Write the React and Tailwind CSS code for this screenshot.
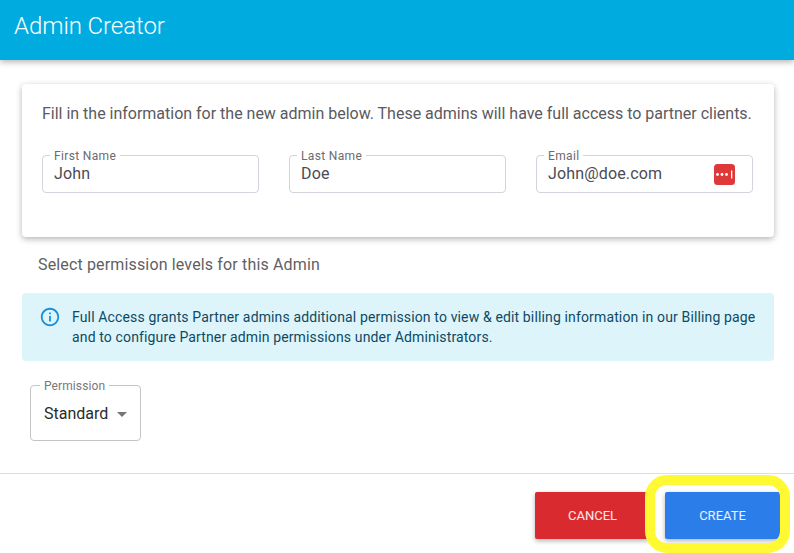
import React from 'react';

const Field = ({ label, value, width, children }) => (
    <div className={`relative h-[38px] rounded-[4px] border border-[#d3d4dc] flex items-center justify-between pl-[11px] pr-[17px] ${width}`}>
        <span className="absolute left-[7px] top-[-7px] bg-white px-[4px] text-[12px] leading-[14px] tracking-[0.35px] text-[#6b6b70]">{label}</span>
        <span className="text-[16px] leading-[20px] tracking-[0.15px] text-[#4a4c55] mt-[-1px]">{value}</span>
        {children}
    </div>
);

const PasswordIcon = () => (
    <svg width="21" height="21" viewBox="0 0 21 21">
        <rect width="21" height="21" rx="3.5" fill="#de3838" />
        <circle cx="3.5" cy="10.5" r="1.4" fill="#fff" />
        <circle cx="8" cy="10.5" r="1.4" fill="#fff" />
        <circle cx="12.5" cy="10.5" r="1.4" fill="#fff" />
        <rect x="17" y="6.5" width="1.3" height="8" fill="#fff" />
    </svg>
);

const InfoIcon = () => (
    <svg width="22" height="22" viewBox="0 0 24 24" fill="#1a8fdc">
        <path d="M11 7h2v2h-2zm0 4h2v6h-2zm1-9C6.48 2 2 6.48 2 12s4.48 10 10 10 10-4.48 10-10S17.52 2 12 2zm0 18c-4.41 0-8-3.59-8-8s3.59-8 8-8 8 3.59 8 8-3.59 8-8 8z" />
    </svg>
);

const App = () => {
    return (
        <div className="relative w-[794px] h-[553px] overflow-hidden bg-white font-['Roboto',sans-serif]">
            <header className="h-[60px] bg-[#00acdf] flex items-center pl-[14px] shadow-[0_2px_6px_rgba(0,0,0,0.3)]">
                <h1 className="text-[24px] leading-[28px] font-light tracking-[-0.08px] text-white mt-[-8px]">Admin Creator</h1>
            </header>

            <main className="pl-[22px] pr-[20px] pt-[24px]">
                <section className="h-[153px] rounded-[4px] bg-white pt-[20px] px-[20px] shadow-[0_2px_6px_rgba(0,0,0,0.3)]">
                    <p className="text-[16px] leading-[20px] tracking-[-0.01px] text-[#5a5a5f] whitespace-nowrap">
                        Fill in the information for the new admin below. These admins will have full access to partner clients.
                    </p>
                    <div className="flex mt-[31px] gap-[30px]">
                        <Field label="First Name" value="John" width="w-[217px]" />
                        <Field label="Last Name" value="Doe" width="w-[217px]" />
                        <Field label="Email" value="John@doe.com" width="w-[217px]">
                            <PasswordIcon />
                        </Field>
                    </div>
                </section>

                <p className="mt-[18px] ml-[16px] text-[16px] leading-[20px] text-[#5f5f64] tracking-[0.15px]">Select permission levels for this Admin</p>

                <div className="mt-[18px] h-[68px] rounded-[4px] bg-[#def4fb] flex pl-[17px] pt-[13px]">
                    <InfoIcon />
                    <p className="ml-[11px] mt-[1px] text-[14px] leading-[20px] tracking-[0.14px] text-[#0c4a63]">
                        Full Access grants Partner admins additional permission to view &amp; edit billing information in our Billing page
                        <br />
                        and to configure Partner admin permissions under Administrators.
                    </p>
                </div>

                <div className="relative mt-[24px] ml-[8px] h-[56px] w-[111px] rounded-[4px] border border-[#c4c4c4] flex items-center pl-[13px] pt-[2px]">
                    <span className="absolute left-[9px] top-[-7px] bg-white px-[4px] text-[12px] leading-[14px] tracking-[0.1px] text-[#77777a]">Permission</span>
                    <span className="text-[16px] leading-[20px] text-[#2b2b2b]">Standard</span>
                    <svg className="ml-[9px]" width="10" height="5" viewBox="0 0 10 5">
                        <path d="M0 0h10L5 5z" fill="#757575" />
                    </svg>
                </div>
            </main>

            <footer className="mt-[32px] border-t border-[#dedede] flex justify-end gap-[15px] pt-[18px] pr-[14px]">
                <button className="w-[115px] h-[47px] rounded-[2px] bg-[#d92b2f] text-[13px] text-white/90 shadow-[0_2px_5px_rgba(0,0,0,0.3)]">CANCEL</button>
                <button className="w-[115px] h-[47px] rounded-[2px] bg-[#2b7de9] text-[13px] text-white/90 shadow-[0_2px_5px_rgba(0,0,0,0.3)]">CREATE</button>
            </footer>

            {/* highlight drawn over the create button */}
            <div className="absolute left-[645px] top-[475px] w-[145px] h-[78px] rounded-[22px] border-[10px] border-[#fff933]"></div>
        </div>
    );
};

export default App;
